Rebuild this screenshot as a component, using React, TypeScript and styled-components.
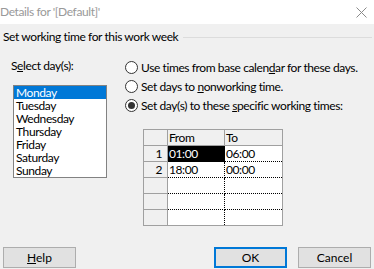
import React from 'react';
import styled, { createGlobalStyle } from 'styled-components';

const GlobalStyle = createGlobalStyle`
  html, body {
    margin: 0;
    padding: 0;
    background: #f0f0f0;
  }
  body {
    font-family: Lato, 'Noto Sans', sans-serif;
    font-size: 12px;
    letter-spacing: -0.4px;
    color: #000;
  }
`;

const days = ['Monday', 'Tuesday', 'Wednesday', 'Thursday', 'Friday', 'Saturday', 'Sunday'];

const rows: Array<[string, string]> = [
  ['01:00', '06:00'],
  ['18:00', '00:00'],
  ['', ''],
  ['', ''],
  ['', ''],
];

// Window

const Window = styled.div`
  width: 374px;
  height: 269px;
  display: flex;
  flex-direction: column;
  background: #f0f0f0;
  overflow: hidden;
`;

const TitleBar = styled.div`
  height: 24px;
  flex-shrink: 0;
  background: #fff;
  display: flex;
  align-items: center;
  justify-content: space-between;
  padding: 0 7px 0 0;
  color: #999;
  line-height: 24px;
`;

const CloseIcon = () => (
  <svg width="11" height="11" viewBox="0 0 11 11">
    <path d="M0.5 0.5 L10.5 10.5 M10.5 0.5 L0.5 10.5" stroke="#8a8a8a" strokeWidth="1" />
  </svg>
);

// Group header

const GroupHeader = styled.div`
  margin: 6px 2px 0 3px;
  height: 14px;
  display: flex;
  align-items: center;
  gap: 5px;
  line-height: 14px;
  white-space: nowrap;
  &::after {
    content: '';
    flex: 1;
    height: 1px;
    background: #dcdcdc;
  }
`;

const Content = styled.div`
  display: flex;
  margin-top: 14px;
`;

// Left column

const LeftCol = styled.div`
  width: 114px;
  flex-shrink: 0;
  padding-left: 11px;
  box-sizing: border-box;
`;

const Label = styled.div`
  margin-top: 1px;
  line-height: 14px;
`;

const ListBox = styled.div`
  margin: 12px 0 0 2px;
  width: 94px;
  height: 93px;
  box-sizing: border-box;
  border: 1px solid #828282;
  background: #fff;
  overflow: hidden;
`;

const ListItem = styled.div<{ $selected?: boolean }>`
  height: 13px;
  line-height: 13px;
  padding-left: 2px;
  background: ${p => (p.$selected ? '#0078d7' : 'transparent')};
  color: ${p => (p.$selected ? '#fff' : '#000')};
`;

// Right column

const RightCol = styled.div`
  padding-left: 11px;
`;

const RadioRow = styled.div`
  height: 19px;
  display: flex;
  align-items: center;
  gap: 3px;
  white-space: nowrap;
`;

const RadioCircle = styled.span<{ $checked?: boolean }>`
  width: 13px;
  height: 13px;
  flex-shrink: 0;
  box-sizing: border-box;
  border-radius: 50%;
  border: 1px solid #333;
  background: #fff;
  display: flex;
  align-items: center;
  justify-content: center;
  &::after {
    content: '';
    width: 7px;
    height: 7px;
    border-radius: 50%;
    background: ${p => (p.$checked ? '#333' : 'transparent')};
  }
`;

// Grid

const Grid = styled.table`
  margin: 14px 0 0 18px;
  border-collapse: collapse;
  border: 1px solid #a0a0a0;
  table-layout: fixed;
  width: 139px;
`;

const HeadCell = styled.th<{ $w: number }>`
  width: ${p => p.$w}px;
  height: 16px;
  padding: 0 0 0 1px;
  box-sizing: border-box;
  text-align: left;
  font-weight: normal;
  background: #f0f0f0;
  border: 1px solid #a0a0a0;
  line-height: 15px;
`;

const RowNum = styled.td`
  height: 15px;
  padding: 0 5px 0 0;
  text-align: right;
  background: #f0f0f0;
  border: 1px solid #a0a0a0;
  line-height: 15px;
`;

const Cell = styled.td<{ $active?: boolean; $last?: boolean }>`
  height: 15px;
  padding: 0 0 0 1px;
  line-height: 15px;
  background: ${p => (p.$active ? '#000' : '#fff')};
  color: ${p => (p.$active ? '#fff' : '#000')};
  border-bottom: 1px dotted #000;
  border-right: ${p => (p.$last ? '1px solid #a0a0a0' : '1px dotted #000')};
`;

// Footer

const Footer = styled.div`
  margin-top: auto;
  display: flex;
  gap: 11px;
  padding: 0 3px 1px;
`;

const Button = styled.button<{ $default?: boolean }>`
  width: 73px;
  height: 21px;
  box-sizing: border-box;
  font: inherit;
  color: #000;
  background: #e1e1e1;
  border: ${p => (p.$default ? '2px solid #0078d7' : '1px solid #adadad')};
  padding: 0;
  line-height: 17px;
`;

const Spacer = styled.div`
  flex: 1;
`;

export default function App() {
  return (
    <Window>
      <GlobalStyle />
      <TitleBar>
        <span>Details for '[Default]'</span>
        <CloseIcon />
      </TitleBar>

      <GroupHeader>Set working time for this work week</GroupHeader>

      <Content>
        <LeftCol>
          <Label>
            S<u>e</u>lect day(s):
          </Label>
          <ListBox>
            {days.map((d, i) => (
              <ListItem key={d} $selected={i === 0}>
                {d}
              </ListItem>
            ))}
          </ListBox>
        </LeftCol>

        <RightCol>
          <RadioRow>
            <RadioCircle />
            <span>
              Use times from base calen<u>d</u>ar for these days.
            </span>
          </RadioRow>
          <RadioRow>
            <RadioCircle />
            <span>
              Set days to <u>n</u>onworking time.
            </span>
          </RadioRow>
          <RadioRow>
            <RadioCircle $checked />
            <span>
              Set day(s) to these <u>s</u>pecific working times:
            </span>
          </RadioRow>

          <Grid>
            <thead>
              <tr>
                <HeadCell $w={24} />
                <HeadCell $w={57}>From</HeadCell>
                <HeadCell $w={58}>To</HeadCell>
              </tr>
            </thead>
            <tbody>
              {rows.map((r, i) => (
                <tr key={i}>
                  <RowNum>{r[0] ? i + 1 : ''}</RowNum>
                  <Cell $active={i === 0}>{r[0]}</Cell>
                  <Cell $last>{r[1]}</Cell>
                </tr>
              ))}
            </tbody>
          </Grid>
        </RightCol>
      </Content>

      <Footer>
        <Button>
          <u>H</u>elp
        </Button>
        <Spacer />
        <Button $default>OK</Button>
        <Button>Cancel</Button>
      </Footer>
    </Window>
  );
}
